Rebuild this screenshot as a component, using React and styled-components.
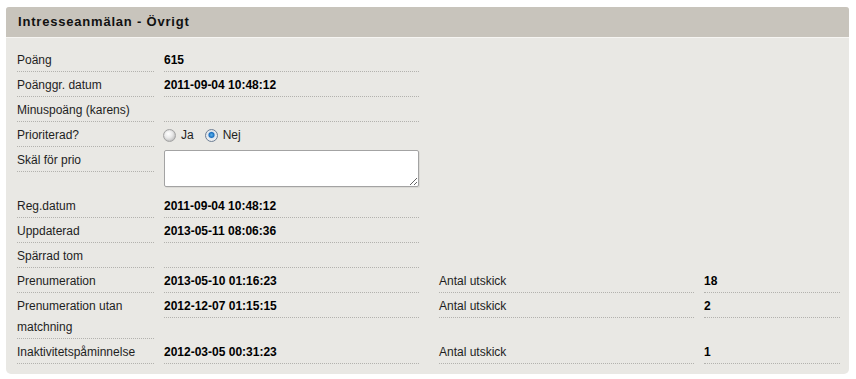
import React from 'react';
import styled, { createGlobalStyle } from 'styled-components';

const GlobalStyle = createGlobalStyle`
  body {
    margin: 0;
    background: #ffffff;
    font-family: "Liberation Sans", Arial, sans-serif;
    font-size: 12px;
    color: #1a1a1a;
  }
`;

const Page = styled.div`
  padding: 7px 7px 6px 6px;
`;

const Panel = styled.section`
  background: #e9e8e4;
  border-radius: 3px 3px 5px 5px;
  overflow: hidden;
`;

const Header = styled.h2`
  margin: 0;
  height: 30px;
  line-height: 30px;
  padding-left: 12px;
  background: #c8c4bc;
  border-bottom: 1px solid #f6f5f2;
  font-size: 13px;
  font-weight: bold;
  letter-spacing: 0.8px;
  color: #111;
`;

const Body = styled.div`
  padding: 9px 9px 10px 11px;
`;

const Row = styled.div`
  display: flex;
  align-items: flex-start;
`;

const Cell = styled.div`
  flex: none;
  width: ${p => p.$w}px;
  margin-right: ${p => p.$mr || 0}px;
  padding-top: 3px;
  line-height: 21px;
  min-height: 21px;
  border-bottom: ${p => (p.$plain ? '0' : '1px dotted #b3b2ae')};
  font-weight: ${p => (p.$bold ? 'bold' : 'normal')};
  color: ${p => (p.$bold ? '#000' : '#1e1e1e')};
`;

const RadioGroup = styled.div`
  display: flex;
  align-items: center;
  height: 21px;
  margin-left: -1px;
`;

const RadioLabel = styled.label`
  display: flex;
  align-items: center;
  margin-right: 11px;
`;

const RadioDot = styled.span`
  width: 11px;
  height: 11px;
  margin-right: 5px;
  border-radius: 50%;
  border: 1px solid ${p => (p.$checked ? '#6e7f95' : '#a3a3a3')};
  background: ${p =>
    p.$checked
      ? 'radial-gradient(circle at 50% 45%, #5fb6ee 0, #1a6fc0 2.5px, #dfe6ee 3.6px, #f4f4f4 6px)'
      : 'radial-gradient(circle at 40% 35%, #ffffff 0, #e9e9e9 4px, #c9c9c9 7px)'};
  box-shadow: inset 0 0 1px rgba(0, 0, 0, 0.15);
`;

const Area = styled.textarea`
  display: block;
  box-sizing: border-box;
  width: 255px;
  height: 37px;
  margin: 0 0 6px 0;
  border: 1px solid #a3a3a3;
  border-radius: 2px;
  background: #fff;
  font-family: "Liberation Sans", Arial, sans-serif;
  font-size: 12px;
  padding: 2px;
  resize: both;
  box-shadow: 1px 1px 0 rgba(0, 0, 0, 0.06);
`;

const Radio = ({ checked, children }) => (
  <RadioLabel>
    <RadioDot $checked={checked} />
    {children}
  </RadioLabel>
);

const basic = [
  ['Poäng', '615'],
  ['Poänggr. datum', '2011-09-04 10:48:12'],
  ['Minuspoäng (karens)', ''],
];

const dates = [
  ['Reg.datum', '2011-09-04 10:48:12'],
  ['Uppdaterad', '2013-05-11 08:06:36'],
  ['Spärrad tom', ''],
];

const mailings = [
  ['Prenumeration', '2013-05-10 01:16:23', '18'],
  ['Prenumeration utan matchning', '2012-12-07 01:15:15', '2'],
  ['Inaktivitetspåminnelse', '2012-03-05 00:31:23', '1'],
];

const Label = props => <Cell $w={137} $mr={10} {...props} />;
const Value = props => <Cell $w={255} $mr={20} $bold {...props} />;

export default function App() {
  return (
    <Page>
      <GlobalStyle />
      <Panel>
        <Header>Intresseanmälan - Övrigt</Header>
        <Body>
          {basic.map(([label, value]) => (
            <Row key={label}>
              <Label>{label}</Label>
              <Value>{value}</Value>
            </Row>
          ))}
          <Row>
            <Label>Prioriterad?</Label>
            <Value $plain $bold={false}>
              <RadioGroup>
                <Radio>Ja</Radio>
                <Radio checked>Nej</Radio>
              </RadioGroup>
            </Value>
          </Row>
          <Row>
            <Label>Skäl för prio</Label>
            <Value $plain>
              <Area />
            </Value>
          </Row>
          {dates.map(([label, value]) => (
            <Row key={label}>
              <Label>{label}</Label>
              <Value>{value}</Value>
            </Row>
          ))}
          {mailings.map(([label, value, count]) => (
            <Row key={label}>
              <Label>{label}</Label>
              <Value>{value}</Value>
              <Cell $w={255} $mr={10}>Antal utskick</Cell>
              <Cell $w={136} $bold>{count}</Cell>
            </Row>
          ))}
        </Body>
      </Panel>
    </Page>
  );
}
